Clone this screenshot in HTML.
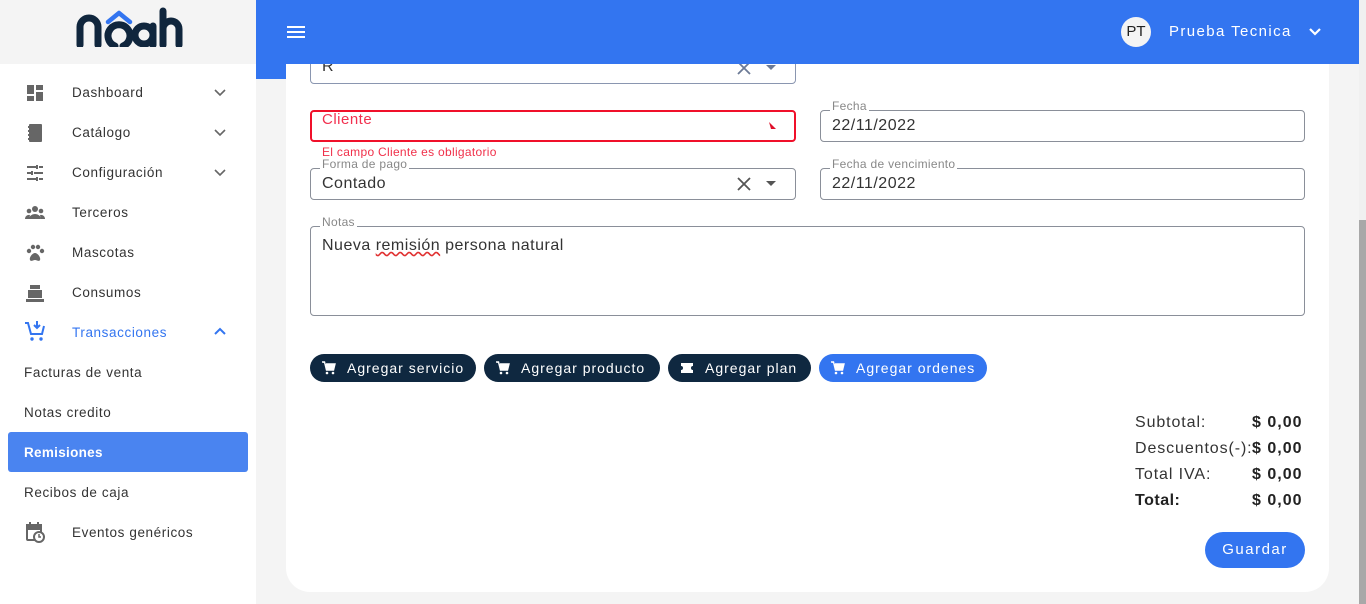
<!DOCTYPE html>
<html><head><meta charset="utf-8"><style>
*{box-sizing:border-box;margin:0;padding:0}
body{width:1366px;height:604px;overflow:hidden;background:#f4f4f4;font-family:"Liberation Sans",sans-serif;position:relative;color:#333}
.a{position:absolute}
#side{left:0;top:0;width:256px;height:604px;background:#fff}
#logo{left:0;top:0;width:256px;height:64px;background:#f4f4f4}
.mi{position:absolute;left:72px;font-size:13.5px;color:#333;letter-spacing:.6px}
.ic{position:absolute;left:24px;width:22px;height:22px}
.chev{position:absolute;left:212px;width:16px;height:16px}
.sub{position:absolute;left:24px;font-size:13.5px;color:#333;letter-spacing:.6px}
#hdr{left:256px;top:0;width:1103px;height:64px;background:#3375f0;z-index:5}
#card{left:286px;top:64px;width:1043px;height:528px;background:#fff;border-radius:0 0 24px 24px}
.box{position:absolute;border:1px solid #8a8f99;border-radius:4px;background:#fff}
.lbl{position:absolute;font-size:12px;color:#888;background:#fff;padding:0 2px;line-height:12px;letter-spacing:.3px}
.val{position:absolute;font-size:16px;color:#333;letter-spacing:.5px}
.btn{position:absolute;top:354px;height:28px;border-radius:14px;background:#0f2840;color:#fff;font-size:14px;letter-spacing:1px;line-height:28px;padding-left:37px}
.btn svg{position:absolute;left:12px;top:7px}
.tl{position:absolute;left:1135px;font-size:16px;color:#333;letter-spacing:.9px}
.tv{position:absolute;left:1252px;font-size:16px;font-weight:bold;color:#222;letter-spacing:1px}
</style></head><body>
<div id="side" class="a">
<div id="logo" class="a">
<svg class="a" style="left:74px;top:5px" width="110" height="42" viewBox="0 0 110 42">
<path d="M6 40V22a9 9 0 0 1 18 0v18" fill="none" stroke="#10263d" stroke-width="7" stroke-linecap="round"/>
<path d="M34 17l11-9 11 9" fill="none" stroke="#3375f0" stroke-width="4.5" stroke-linecap="round" stroke-linejoin="round"/>
<path d="M41 41a11 11 0 1 1 8 0" fill="none" stroke="#10263d" stroke-width="7" stroke-linecap="round"/>
<circle cx="70" cy="30" r="9" fill="none" stroke="#10263d" stroke-width="7"/><path d="M79 21v19" stroke="#10263d" stroke-width="7" stroke-linecap="round"/>
<path d="M89 6v34M89 24a8 8 0 0 1 16 0v16" fill="none" stroke="#10263d" stroke-width="7" stroke-linecap="round"/>
</svg></div>
<svg class="ic" style="top:82px" viewBox="0 0 22 22"><path d="M3 3h7v9H3zM12 3h7v5h-7zM12 10h7v9h-7zM3 14h7v5H3z" fill="#666"/></svg>
<div class="mi" style="top:85px">Dashboard</div>
<svg class="ic" style="top:122px" viewBox="0 0 22 22"><rect x="5" y="2" width="13" height="18" rx="1" fill="#666"/><path d="M4 5h3M4 9h3M4 13h3M4 17h3" stroke="#666" stroke-width="2"/></svg>
<div class="mi" style="top:125px">Catálogo</div>
<svg class="ic" style="top:162px" viewBox="0 0 22 22"><path d="M3 5h9M15 5h4M13 3v4M3 11h4M10 11h9M8 9v4M3 17h9M15 17h4M13 15v4" stroke="#666" stroke-width="2"/></svg>
<div class="mi" style="top:165px">Configuración</div>
<svg class="ic" style="top:202px" viewBox="0 0 22 22"><circle cx="11" cy="7" r="3" fill="#666"/><circle cx="5" cy="9" r="2.3" fill="#666"/><circle cx="17" cy="9" r="2.3" fill="#666"/><path d="M5 17a6 5 0 0 1 12 0zM1 17a4 4 0 0 1 5-4l-1 4zM21 17a4 4 0 0 0-5-4l1 4z" fill="#666"/></svg>
<div class="mi" style="top:205px">Terceros</div>
<svg class="ic" style="top:242px" viewBox="0 0 22 22"><circle cx="5" cy="9" r="2.2" fill="#666"/><circle cx="9" cy="5" r="2.2" fill="#666"/><circle cx="14" cy="5" r="2.2" fill="#666"/><circle cx="18" cy="9" r="2.2" fill="#666"/><path d="M11 11c-3 0-6 5-5 7s3 0 5 0 4 2 5 0-2-7-5-7z" fill="#666"/></svg>
<div class="mi" style="top:245px">Mascotas</div>
<svg class="ic" style="top:282px" viewBox="0 0 22 22"><rect x="6" y="3" width="10" height="4" fill="#666"/><rect x="4" y="8" width="14" height="8" fill="#666"/><rect x="2" y="17" width="18" height="3" fill="#666"/></svg>
<div class="mi" style="top:285px">Consumos</div>
<svg class="ic" style="top:320px" viewBox="0 0 22 22"><path d="M1 3h3l3 11h11l2-8" fill="none" stroke="#3375f0" stroke-width="2"/><path d="M13 1v6M10 5l3 3 3-3" fill="none" stroke="#3375f0" stroke-width="2"/><circle cx="8" cy="19" r="1.7" fill="#3375f0"/><circle cx="17" cy="19" r="1.7" fill="#3375f0"/></svg>
<div class="mi" style="top:325px;color:#3375f0">Transacciones</div>
<svg class="chev" style="top:84px" viewBox="0 0 16 16"><path d="M3 6l5 5 5-5" fill="none" stroke="#666" stroke-width="1.6"/></svg>
<svg class="chev" style="top:124px" viewBox="0 0 16 16"><path d="M3 6l5 5 5-5" fill="none" stroke="#666" stroke-width="1.6"/></svg>
<svg class="chev" style="top:164px" viewBox="0 0 16 16"><path d="M3 6l5 5 5-5" fill="none" stroke="#666" stroke-width="1.6"/></svg>
<svg class="chev" style="top:324px" viewBox="0 0 16 16"><path d="M3 10l5-5 5 5" fill="none" stroke="#3375f0" stroke-width="2"/></svg>
<div class="sub" style="top:365px">Facturas de venta</div>
<div class="sub" style="top:405px">Notas credito</div>
<div class="a" style="left:8px;top:432px;width:240px;height:40px;background:#4a84f0;border-radius:3px"></div>
<div class="sub" style="top:445px;color:#fff;font-weight:bold;letter-spacing:.3px">Remisiones</div>
<div class="sub" style="top:485px">Recibos de caja</div>
<svg class="ic" style="top:521px" viewBox="0 0 22 22"><rect x="3" y="4" width="14" height="15" rx="1" fill="none" stroke="#666" stroke-width="2"/><path d="M3 4h14v4H3zM6 1v4M14 1v4" stroke="#666" stroke-width="2" fill="#666"/><circle cx="15" cy="16" r="5" fill="#fff" stroke="#666" stroke-width="2"/><path d="M15 13v3h2" stroke="#666" stroke-width="1.5" fill="none"/></svg>
<div class="mi" style="top:525px">Eventos genéricos</div>
</div>
<div class="a" style="left:256px;top:64px;width:30px;height:15px;background:#3375f0"></div>
<div id="hdr" class="a">
<svg class="a" style="left:31px;top:25px" width="18" height="14" viewBox="0 0 18 14"><path d="M0 2h18M0 7h18M0 12h18" stroke="#fff" stroke-width="2"/></svg>
<div class="a" style="left:865px;top:17px;width:30px;height:30px;border-radius:50%;background:#f4f4f4;color:#222;font-size:15px;text-align:center;line-height:30px">PT</div>
<div class="a" style="left:913px;top:23px;color:#fff;font-size:15px;letter-spacing:1.4px">Prueba Tecnica</div>
<svg class="a" style="left:1052px;top:25px" width="14" height="14" viewBox="0 0 14 14"><path d="M2 4l5 5 5-5" fill="none" stroke="#fff" stroke-width="2.2"/></svg>
</div>
<div class="a" style="left:1359px;top:0;width:7px;height:604px;background:#f0f0f0"></div>
<div class="a" style="left:1359px;top:220px;width:7px;height:384px;background:#a8a8a8"></div>
<div id="card" class="a"></div>
<div class="box" style="left:310px;top:50px;width:486px;height:34px;border-color:#8a96b0"></div>
<div class="val" style="left:322px;top:58px;color:#333">R</div>
<svg class="a" style="left:736px;top:60px" width="16" height="16"><path d="M2 2l12 12M14 2L2 14" stroke="#6c7a96" stroke-width="1.8"/></svg>
<svg class="a" style="left:765px;top:64px" width="12" height="8"><path d="M1 1h10L6 6z" fill="#6c7a96"/></svg>
<div class="box" style="left:310px;top:110px;width:486px;height:32px;border:2px solid #f0102a"></div>
<div class="val" style="left:322px;top:111px;color:#f2304f;font-size:15px">Cliente</div>
<svg class="a" style="left:768px;top:121px" width="10" height="10"><path d="M1 1l7 7H3z" fill="#e0102a"/></svg>
<div class="a" style="left:322px;top:145px;font-size:12px;color:#f0304a;letter-spacing:.3px">El campo Cliente es obligatorio</div>
<div class="box" style="left:310px;top:168px;width:486px;height:32px"></div>
<div class="lbl" style="left:320px;top:158px">Forma de pago</div>
<div class="val" style="left:322px;top:175px">Contado</div>
<svg class="a" style="left:736px;top:176px" width="16" height="16"><path d="M2 2l12 12M14 2L2 14" stroke="#555" stroke-width="1.8"/></svg>
<svg class="a" style="left:765px;top:180px" width="12" height="8"><path d="M1 1h10L6 6z" fill="#555"/></svg>
<div class="box" style="left:820px;top:110px;width:485px;height:32px"></div>
<div class="lbl" style="left:830px;top:100px">Fecha</div>
<div class="val" style="left:832px;top:117px">22/11/2022</div>
<div class="box" style="left:820px;top:168px;width:485px;height:32px"></div>
<div class="lbl" style="left:830px;top:158px">Fecha de vencimiento</div>
<div class="val" style="left:832px;top:175px">22/11/2022</div>
<div class="box" style="left:310px;top:226px;width:995px;height:90px"></div>
<div class="lbl" style="left:320px;top:216px">Notas</div>
<div class="val" style="left:322px;top:237px">Nueva <span style="text-decoration:underline wavy #e03030">remisión</span> persona natural</div>
<div class="btn" style="left:310px;width:166px"><svg width="14" height="14" viewBox="0 0 14 14"><path d="M0 1h2.5l2 8h7l1.5-6H4" fill="#fff" stroke="#fff" stroke-width="1.4"/><circle cx="5" cy="12" r="1.3" fill="#fff"/><circle cx="11" cy="12" r="1.3" fill="#fff"/></svg>Agregar servicio</div>
<div class="btn" style="left:484px;width:176px"><svg width="14" height="14" viewBox="0 0 14 14"><path d="M0 1h2.5l2 8h7l1.5-6H4" fill="#fff" stroke="#fff" stroke-width="1.4"/><circle cx="5" cy="12" r="1.3" fill="#fff"/><circle cx="11" cy="12" r="1.3" fill="#fff"/></svg>Agregar producto</div>
<div class="btn" style="left:668px;width:143px"><svg width="14" height="14" viewBox="0 0 14 14"><path d="M1 2h12v3a2 2 0 0 0 0 4v3H1V9a2 2 0 0 0 0-4z" fill="#fff"/></svg>Agregar plan</div>
<div class="btn" style="left:819px;width:168px;background:#3375f0"><svg width="14" height="14" viewBox="0 0 14 14"><path d="M0 1h2.5l2 8h7l1.5-6H4" fill="#fff" stroke="#fff" stroke-width="1.4"/><circle cx="5" cy="12" r="1.3" fill="#fff"/><circle cx="11" cy="12" r="1.3" fill="#fff"/></svg>Agregar ordenes</div>
<div class="tl" style="top:414px">Subtotal:</div><div class="tv" style="top:414px">$ 0,00</div>
<div class="tl" style="top:440px">Descuentos(-):</div><div class="tv" style="top:440px">$ 0,00</div>
<div class="tl" style="top:466px">Total IVA:</div><div class="tv" style="top:466px">$ 0,00</div>
<div class="tl" style="top:492px;font-weight:bold;color:#222;letter-spacing:.5px">Total:</div><div class="tv" style="top:492px">$ 0,00</div>
<div class="a" style="left:1205px;top:532px;width:100px;height:36px;border-radius:18px;background:#3375f0;color:#fff;font-size:15px;letter-spacing:1.5px;text-align:center;line-height:36px">Guardar</div>
</body></html>
